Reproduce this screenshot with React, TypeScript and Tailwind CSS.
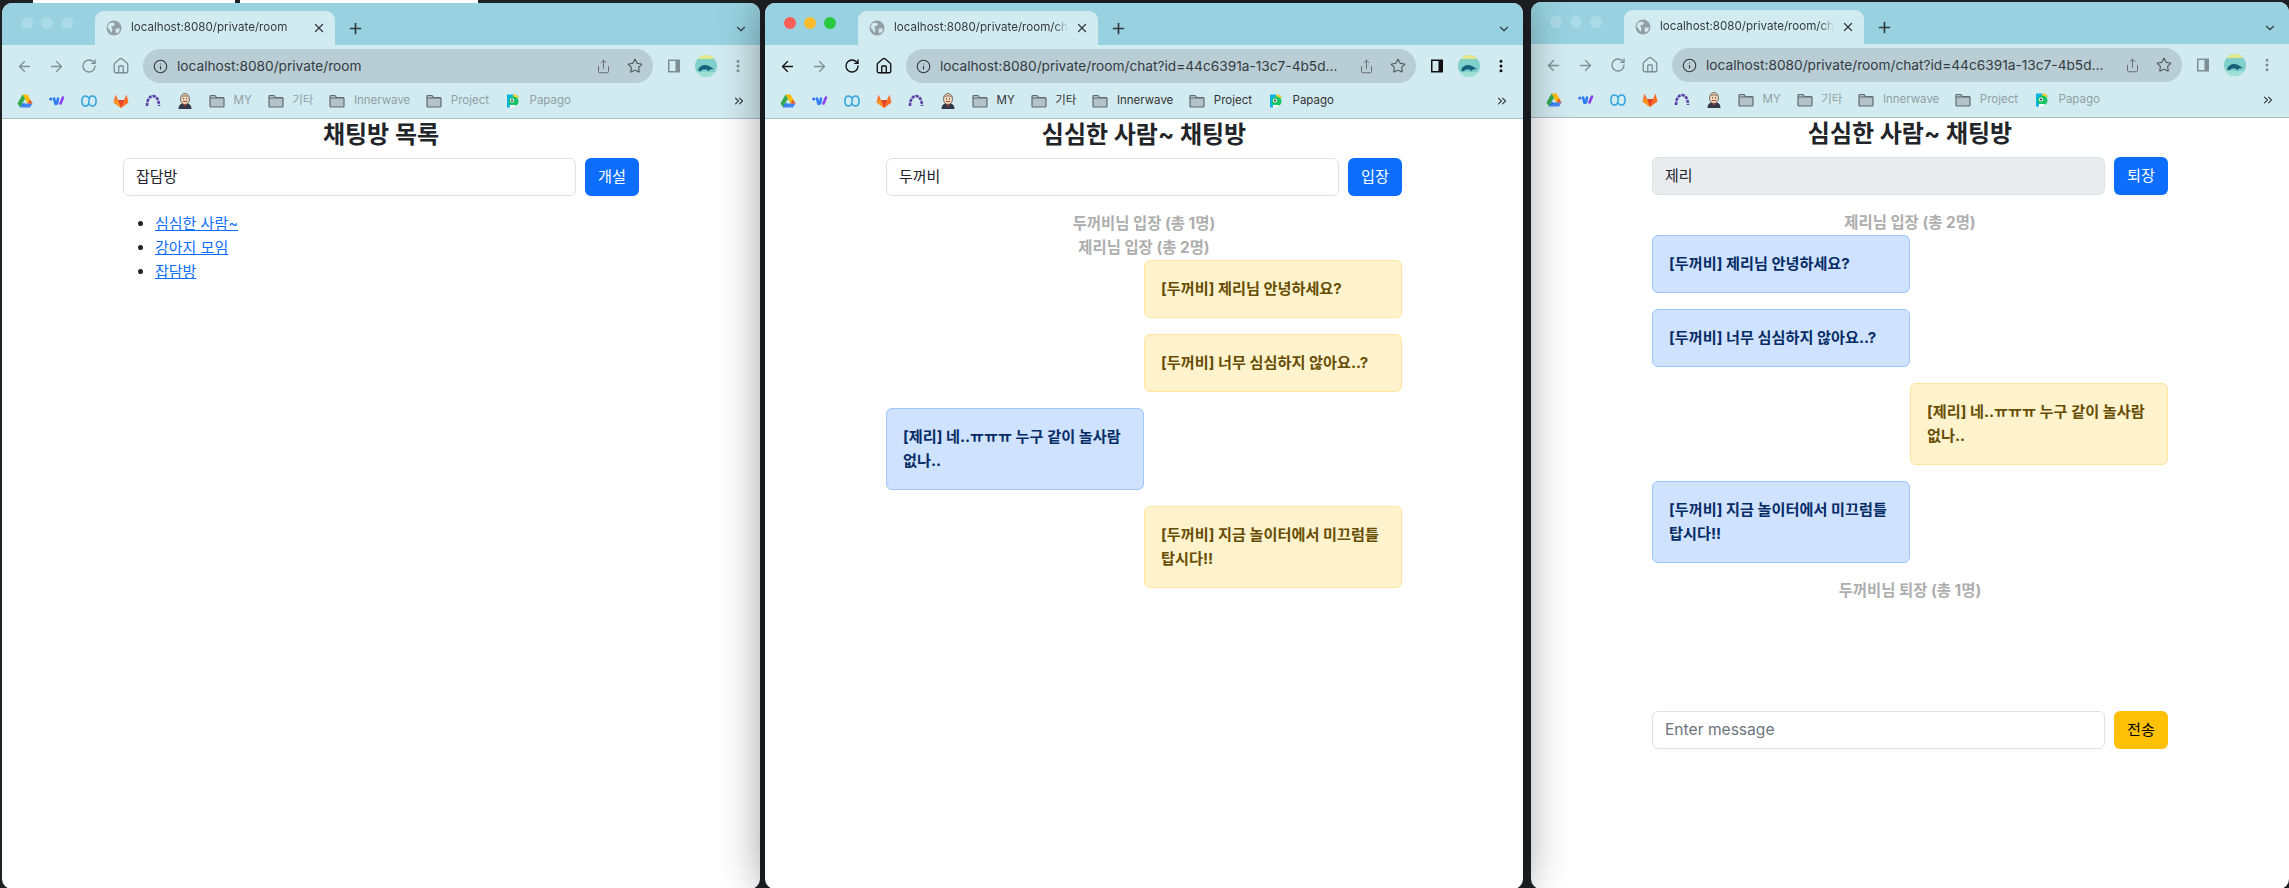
import type { ReactNode } from "react";
import { ArrowLeft, ArrowRight, ChevronDown, ChevronsRight, Home, Info, MoreVertical, Plus, RotateCw, Share, Star, X } from "lucide-react";

const bodyFont = "font-['Inter','Noto_Sans_CJK_KR',sans-serif]";

const Folder = () => (
  <svg width="16" height="16" viewBox="0 0 16 16" className="shrink-0">
    <path d="M1 3.5A1 1 0 0 1 2 2.5h4l1.5 2H14a1 1 0 0 1 1 1v7.5a1 1 0 0 1-1 1H2a1 1 0 0 1-1-1z" fill="#b2c2c8" stroke="#5f6a6e" strokeWidth="1.2" />
    <path d="M1 5h14" stroke="#5f6a6e" strokeWidth="1" />
  </svg>
);

const TabGlobe = () => (
  <svg width="16" height="16" viewBox="0 0 16 16" className="shrink-0">
    <circle cx="8" cy="8" r="7.5" fill="#939fa5" />
    <path d="M3 3.5 7 2.5 9 4 7.5 6 5 6.5 6.5 9.5 5.5 13 3.5 9.5 1.5 7.5z" fill="#d2ebf1" />
    <path d="M10 8.5h4l-1 3.5-2.5 1.5-1-2.5z" fill="#d2ebf1" />
  </svg>
);

const Drive = () => (
  <svg width="16" height="16" viewBox="0 0 16 16" className="shrink-0">
    <path d="M5.5 1.5h5L15.5 10.5h-5z" fill="#fbbc04" />
    <path d="M5.5 1.5 .5 10.5 3 14.5 8 5.8z" fill="#34a853" />
    <path d="M3 14.5h10l2.5-4h-10z" fill="#4285f4" />
    <path d="M3 14.5 5.5 10.5H8z" fill="#1a73e8" />
    <path d="M10.5 10.5h5l-2.5-4z" fill="#ea4335" opacity=".85" />
  </svg>
);

const Wavve = () => (
  <svg width="16" height="16" viewBox="0 0 16 16" className="shrink-0">
    <circle cx="1.8" cy="6" r="1.6" fill="#2b6df6" />
    <path d="M5 5.5 6.5 11" stroke="#2f7cf6" strokeWidth="2.6" strokeLinecap="round" />
    <path d="M9 5.5 8 10.5" stroke="#2f7cf6" strokeWidth="2.6" strokeLinecap="round" />
    <path d="M14 4.5 11.5 10.5" stroke="#8a3ff0" strokeWidth="2.6" strokeLinecap="round" />
  </svg>
);

const Loop = () => (
  <svg width="16" height="16" viewBox="0 0 16 16" fill="none" className="shrink-0">
    <path d="M8 5.2C7 3.6 5.9 3 4.5 3 2.4 3 .9 5 .9 8s1.5 5 3.6 5c2.5 0 3.5-2.6 3.5-5s1-5 3.5-5c2.1 0 3.6 2 3.6 5s-1.5 5-3.6 5c-1.4 0-2.5-.6-3.5-2.2" stroke="#2ea3dc" strokeWidth="1.5" />
  </svg>
);

const GitLab = () => (
  <svg width="16" height="16" viewBox="0 0 16 16" className="shrink-0">
    <path d="M8 15 .5 9.5 2.5 1.5 5 7h6l2.5-5.5 2 8z" fill="#fc6d26" />
    <path d="M8 15 5 7h6z" fill="#e24329" />
    <path d="M.5 9.5 8 15 5 7H2z" fill="#fca326" opacity=".75" />
  </svg>
);

const Arc = () => (
  <svg width="16" height="16" viewBox="0 0 16 16" fill="none" className="shrink-0">
    <path d="M2 13C2 7 4.5 3 8 3s6 4 6 10" stroke="#5b3fa8" strokeWidth="2.6" strokeDasharray="3.2 .9" />
  </svg>
);

const Jenkins = () => (
  <svg width="16" height="16" viewBox="0 0 16 16" className="shrink-0">
    <path d="M1.5 16c0-3 1.5-5 3.5-5.5h6c2 .5 3.5 2.5 3.5 5.5z" fill="#33384a" />
    <path d="M6.5 11 8 14 9.5 11z" fill="#d33833" />
    <ellipse cx="8" cy="6" rx="4.5" ry="5.5" fill="#f0d6b7" stroke="#4a3a30" strokeWidth=".7" />
    <path d="M4 4.5C5 1 11 1 12 4.5 9 3 7 3 4 4.5z" fill="#9b8a78" />
    <path d="M6 8.5h4" stroke="#a33" strokeWidth=".9" />
    <circle cx="6.5" cy="5.8" r=".6" fill="#222" />
    <circle cx="9.5" cy="5.8" r=".6" fill="#222" />
  </svg>
);

const Papago = () => (
  <svg width="16" height="16" viewBox="0 0 16 16" className="shrink-0">
    <path d="M2 1.5h7a6 6 0 0 1 5 3L8 8v6.5H2z" fill="#08b4e6" />
    <path d="M8 1.5a6 6 0 0 1 6 3L8 6z" fill="#ffd22e" />
    <circle cx="8.5" cy="8.5" r="5" fill="#16c464" />
    <circle cx="7" cy="7.5" r="2" fill="#fff" />
    <circle cx="7" cy="7.5" r="1" fill="#123" />
    <path d="M5 15c3 0 5-1 6-3H5z" fill="#fff" />
  </svg>
);

const Avatar = () => (
  <svg width="22" height="22" viewBox="0 0 22 22" className="shrink-0">
    <defs>
      <clipPath id="avatar-clip">
        <circle cx="11" cy="11" r="11" />
      </clipPath>
    </defs>
    <g clipPath="url(#avatar-clip)">
      <rect width="22" height="22" fill="#7fd0cb" />
      <rect width="22" height="4" fill="#e4e88c" />
      <rect y="17" width="22" height="5" fill="#9ee0d2" />
      <path d="M3 15c2-5 7-6 11-4l5 3-4 .5-2 2-1-2H8l-3 2z" fill="#16607a" />
    </g>
  </svg>
);

const PanelIcon = ({ color }: { color: string }) => (
  <svg width="16" height="16" viewBox="0 0 16 16" fill="none" className="shrink-0">
    <rect x="2" y="1.5" width="12" height="13" fill={color} />
    <rect x="3.5" y="3" width="6" height="10" fill="#d2ebf1" />
  </svg>
);

const Bookmark = ({ label, icon, color }: { label: string; icon?: ReactNode; color: string }) => (
  <div className="flex items-center gap-[8.5px]">
    {icon ?? <Folder />}
    <span className={`text-[11.5px] whitespace-nowrap ${bodyFont}`} style={{ color }}>
      {label}
    </span>
  </div>
);

const ChromeBar = ({ url, title, active }: { url: string; title: string; active: boolean }) => {
  const icon = active ? "#111111" : "#7f8e94";
  const text = active ? "#333333" : "#8f9ea5";
  const disabled = "#7f8e94";
  return (
    <div className="font-['Inter',sans-serif]">
      <div className="relative flex h-[42px] items-end bg-[#98d2e0] pl-[93px] pr-[12px]">
        <div className="absolute top-[14px] left-[19px] flex gap-[8px]">
          <span className={`h-3 w-3 rounded-full ${active ? "bg-[#ff5f57]" : "bg-[#abdbe7]"}`} />
          <span className={`h-3 w-3 rounded-full ${active ? "bg-[#febc2e]" : "bg-[#abdbe7]"}`} />
          <span className={`h-3 w-3 rounded-full ${active ? "bg-[#28c840]" : "bg-[#abdbe7]"}`} />
        </div>
        <div className="flex h-[34px] w-[240px] items-center rounded-t-[9px] bg-[#d2ebf1] pl-[11px] pr-[9px]">
          <TabGlobe />
          <span className="ml-[9px] w-[174px] overflow-hidden text-[11.6px] whitespace-nowrap text-[#333b40] [mask-image:linear-gradient(to_right,black_92%,transparent)]">{title}</span>
          <X size={14} color="#333b40" strokeWidth={2.2} className="ml-auto shrink-0" />
        </div>
        <Plus size={17} color="#333b40" strokeWidth={2.4} className="mb-[8px] ml-[12px]" />
        <ChevronDown size={14} color="#333b40" strokeWidth={2} className="mb-[9px] ml-auto" />
      </div>
      <div className="flex h-[38px] items-center bg-[#d2ebf1] pl-[14px] pr-[14px] pt-[4px]">
        <ArrowLeft size={17} color={icon} strokeWidth={1.8} className="shrink-0" />
        <ArrowRight size={17} color={disabled} strokeWidth={1.8} className="ml-[15px] shrink-0" />
        <RotateCw size={16} color={icon} strokeWidth={2} className="ml-[16px] shrink-0" />
        <Home size={18} color={icon} strokeWidth={1.8} className="ml-[15px] shrink-0" />
        <div className="ml-[13px] flex h-[34px] w-[510px] shrink-0 items-center rounded-full bg-[#b9cdd4] pl-[10px] pr-[10px]">
          <Info size={15} color="#333b40" strokeWidth={1.8} className="shrink-0" />
          <span className="ml-[9px] text-[13.7px] whitespace-nowrap text-[#333b40]">{url}</span>
          <Share size={15} color="#5f6a6e" strokeWidth={1.5} className="ml-auto shrink-0" />
          <Star size={16} color="#4a5357" strokeWidth={1.6} className="ml-[16px] shrink-0" />
        </div>
        <div className="ml-[13px]">
          <PanelIcon color={icon} />
        </div>
        <div className="ml-[13px]">
          <Avatar />
        </div>
        <MoreVertical size={16} color={icon} strokeWidth={2.5} className="ml-auto shrink-0" />
      </div>
      <div className="flex h-[36px] items-center gap-4 border-b border-[#a9bec6] bg-[#d2ebf1] pl-[15px] pr-[14px]">
        <Drive />
        <Wavve />
        <Loop />
        <GitLab />
        <Arc />
        <Jenkins />
        <Bookmark label="MY" color={text} />
        <Bookmark label="기타" color={text} />
        <Bookmark label="Innerwave" color={text} />
        <Bookmark label="Project" color={text} />
        <Bookmark label="Papago" color={text} icon={<Papago />} />
        <ChevronsRight size={14} color="#333b40" strokeWidth={2} className="ml-auto" />
      </div>
    </div>
  );
};

const Form = ({ value, placeholder, action, disabled, warning }: { value?: string; placeholder?: string; action: string; disabled?: boolean; warning?: boolean }) => (
  <div className="flex gap-[9px]">
    <div className={`flex h-[38px] flex-1 items-center rounded-[6px] border border-[#dee2e6] px-[12px] ${disabled ? "bg-[#e9ecef]" : "bg-white"} ${placeholder ? "text-[15.6px] text-[#6c757d]" : "text-[15px] text-[#212529]"}`}>
      {value ?? placeholder}
    </div>
    <div className={`flex h-[38px] w-[54px] items-center justify-center rounded-[6px] text-[15.2px] ${warning ? "bg-[#ffc107] text-black" : "bg-[#0d6efd] text-white"}`}>
      {action}
    </div>
  </div>
);

const Notice = ({ text }: { text: string }) => (
  <div className="h-6 text-center text-[15.4px] leading-6 font-bold text-[#adadad]">{text}</div>
);

const Bubble = ({ text, side }: { text: string; side: "left" | "right" }) => (
  <div className={`mb-4 w-1/2 rounded-[6px] border p-4 text-[15.2px] leading-6 font-bold break-keep ${side === "right" ? "ml-auto border-[#ffe69c] bg-[#fff3cd] text-[#664d03]" : "border-[#9ec5fe] bg-[#cfe2ff] text-[#052c65]"}`}>
    {text}
  </div>
);

const Window = ({ url, title, active, heading, className, children }: { url: string; title: string; active?: boolean; heading: string; className: string; children: ReactNode }) => (
  <div className={`flex w-[758px] shrink-0 flex-col overflow-hidden rounded-[10px] bg-white ${className}`}>
    <ChromeBar url={url} title={title} active={!!active} />
    <div className={`mx-auto w-[516px] pt-px text-[#212529] ${bodyFont}`}>
      <h2 className="mb-[9px] h-[29px] text-center text-[24px] leading-[29px] font-bold">{heading}</h2>
      {children}
    </div>
  </div>
);

const chatUrl = "localhost:8080/private/room/chat?id=44c6391a-13c7-4b5d...";
const chatTitle = "localhost:8080/private/room/chat?id=44c";

export default function App() {
  return (
    <div className="relative flex h-[888px] w-[2289px] overflow-hidden bg-[#1e2124] pl-[2px]">
      <div className="absolute top-0 left-[33px] h-[3px] w-[202px] bg-white" />
      <div className="absolute top-0 left-[240px] h-[3px] w-[238px] bg-white" />
      <Window
        url="localhost:8080/private/room"
        title="localhost:8080/private/room"
        heading="채팅방 목록"
        className="relative mt-[3px] h-[886px]"
      >
        <Form value="잡담방" action="개설" />
        <ul className="mt-4 list-disc pl-8 text-[15px] leading-6">
          <li><a className="text-[#0d6efd] underline">심심한 사람~</a></li>
          <li><a className="text-[#0d6efd] underline">강아지 모임</a></li>
          <li><a className="text-[#0d6efd] underline">잡담방</a></li>
        </ul>
      </Window>
      <Window
        active
        url={chatUrl}
        title={chatTitle}
        heading="심심한 사람~ 채팅방"
        className="relative z-10 mt-[3px] ml-[5px] h-[886px] shadow-[0_0_45px_rgba(0,0,0,0.45)]"
      >
        <Form value="두꺼비" action="입장" />
        <div className="mt-4">
          <Notice text="두꺼비님 입장 (총 1명)" />
          <Notice text="제리님 입장 (총 2명)" />
          <Bubble side="right" text="[두꺼비] 제리님 안녕하세요?" />
          <Bubble side="right" text="[두꺼비] 너무 심심하지 않아요..?" />
          <Bubble side="left" text="[제리] 네..ㅠㅠㅠ 누구 같이 놀사람 없나.." />
          <Bubble side="right" text="[두꺼비] 지금 놀이터에서 미끄럼틀 탑시다!!" />
        </div>
      </Window>
      <Window
        url={chatUrl}
        title={chatTitle}
        heading="심심한 사람~ 채팅방"
        className="mt-[2px] ml-[8px] h-[887px]"
      >
        <Form value="제리" action="퇴장" disabled />
        <div className="mt-4 h-[500px]">
          <Notice text="제리님 입장 (총 2명)" />
          <Bubble side="left" text="[두꺼비] 제리님 안녕하세요?" />
          <Bubble side="left" text="[두꺼비] 너무 심심하지 않아요..?" />
          <Bubble side="right" text="[제리] 네..ㅠㅠㅠ 누구 같이 놀사람 없나.." />
          <Bubble side="left" text="[두꺼비] 지금 놀이터에서 미끄럼틀 탑시다!!" />
          <Notice text="두꺼비님 퇴장 (총 1명)" />
        </div>
        <Form placeholder="Enter message" action="전송" warning />
      </Window>
    </div>
  );
}
